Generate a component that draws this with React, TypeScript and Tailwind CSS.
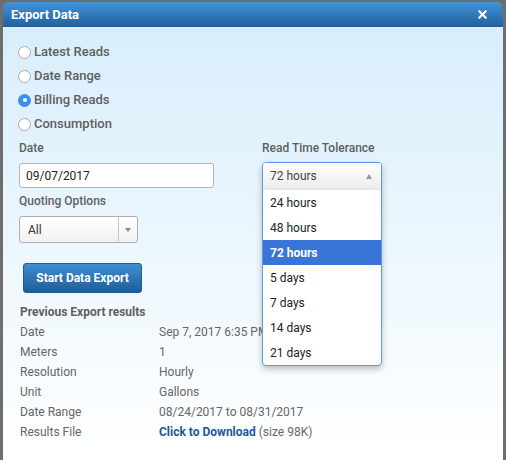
import { X } from 'lucide-react';

const radios = [
  { label: 'Latest Reads', checked: false },
  { label: 'Date Range', checked: false },
  { label: 'Billing Reads', checked: true },
  { label: 'Consumption', checked: false },
];

const toleranceOptions = ['24 hours', '48 hours', '72 hours', '5 days', '7 days', '14 days', '21 days'];

const results = [
  { label: 'Date', value: 'Sep 7, 2017 6:35 PM' },
  { label: 'Meters', value: '1' },
  { label: 'Resolution', value: 'Hourly' },
  { label: 'Unit', value: 'Gallons' },
  { label: 'Date Range', value: '08/24/2017 to 08/31/2017' },
];

function Radio({ label, checked }: { label: string; checked: boolean }) {
  return (
    <label className="flex h-6 items-center gap-[3px]">
      {checked ? (
        <span className="flex h-[13px] w-[13px] items-center justify-center rounded-full bg-[#3b8ff3]">
          <span className="h-[4px] w-[4px] rounded-full bg-white" />
        </span>
      ) : (
        <span className="h-[13px] w-[13px] rounded-full border border-[#a9a9a9] bg-white" />
      )}
      <span className="text-[13px] font-medium text-[#5f5f5f]">{label}</span>
    </label>
  );
}

export default function App() {
  return (
    <div className="h-[460px] w-[506px] overflow-hidden bg-[#6e6e6e] px-[3px] pt-[2px] font-['Roboto',sans-serif]">
      <div className="flex h-full flex-col overflow-hidden rounded-t-[6px]">
        {/* Header */}
        <div className="flex h-[25px] shrink-0 items-center justify-between bg-gradient-to-b from-[#4394d8] to-[#22609c] pl-2 pr-[14px]">
          <span className="text-[13px] font-bold text-white">Export Data</span>
          <X size={13} strokeWidth={4} className="text-white" />
        </div>

        {/* Body */}
        <div className="relative flex-1 bg-gradient-to-b from-[#d8eefb] to-white pl-[15px] pt-[13px]">
          <div className="flex flex-col">
            {radios.map((r) => (
              <Radio key={r.label} label={r.label} checked={r.checked} />
            ))}
          </div>

          <div className="mt-[2px] flex">
            <div className="w-[244px] pl-[1px]">
              <div className="text-[12px] font-medium leading-5 text-[#5f5f5f]">Date</div>
              <input
                readOnly
                value="09/07/2017"
                className="mt-[5px] h-[25px] w-[195px] rounded-[3px] border border-[#b5b5b5] bg-white px-[6px] text-[12px] text-[#222] outline-none"
              />
              <div className="mt-[3px] text-[12px] font-medium leading-5 text-[#5f5f5f]">Quoting Options</div>
              <div className="mt-[5px] flex h-[27px] w-[119px] overflow-hidden rounded-[3px] border border-[#b0b0b0] bg-gradient-to-b from-white to-[#f1f1f1]">
                <div className="flex flex-1 items-center px-[8px] text-[12px] text-[#333]">All</div>
                <div className="flex w-[19px] items-center justify-center border-l border-[#c8c8c8]">
                  <span className="h-0 w-0 border-x-[3px] border-t-[4px] border-x-transparent border-t-[#888]" />
                </div>
              </div>
              <button className="ml-[4px] mt-[20px] h-[30px] w-[119px] rounded-[3px] border border-[#1d5d9b] bg-gradient-to-b from-[#3d8fd3] to-[#1f5d9a] text-[12px] font-bold text-white">
                Start Data Export
              </button>
            </div>

            <div className="w-[119px]">
              <div className="text-[12px] font-medium leading-5 text-[#5f5f5f]">Read Time Tolerance</div>
            </div>
          </div>

          {/* Previous results */}
          <div className="mt-[9px] pl-[2px]">
            <div className="text-[12px] font-bold leading-5 text-[#5f5f5f]">Previous Export results</div>
            {results.map((row) => (
              <div key={row.label} className="flex text-[12px] leading-5 text-[#666]">
                <span className="w-[139px]">{row.label}</span>
                <span>{row.value}</span>
              </div>
            ))}
            <div className="flex text-[12px] leading-5 text-[#666]">
              <span className="w-[139px]">Results File</span>
              <span>
                <span className="font-bold text-[#1c5a97]">Click to Download</span> (size 98K)
              </span>
            </div>
          </div>

          {/* Open dropdown */}
          <div className="absolute left-[259px] top-[135px] w-[120px] overflow-hidden rounded-[4px] border border-[#5b97ea] bg-white shadow-[0_3px_6px_rgba(0,0,0,0.25)]">
            <div className="flex h-[27px] items-center justify-between border-b border-[#e4e4e4] bg-gradient-to-b from-white to-[#ececec] pl-[7px] pr-[9px] text-[12px] text-[#444]">
              <span>72 hours</span>
              <span className="h-0 w-0 border-x-[3px] border-b-[5px] border-x-transparent border-b-[#999]" />
            </div>
            {toleranceOptions.map((opt) => (
              <div
                key={opt}
                className={
                  opt === '72 hours'
                    ? 'flex h-[25px] items-center bg-[#3875d7] px-[7px] text-[12px] font-bold text-white'
                    : 'flex h-[25px] items-center px-[7px] text-[12px] text-[#222]'
                }
              >
                {opt}
              </div>
            ))}
          </div>
        </div>
      </div>
    </div>
  );
}
